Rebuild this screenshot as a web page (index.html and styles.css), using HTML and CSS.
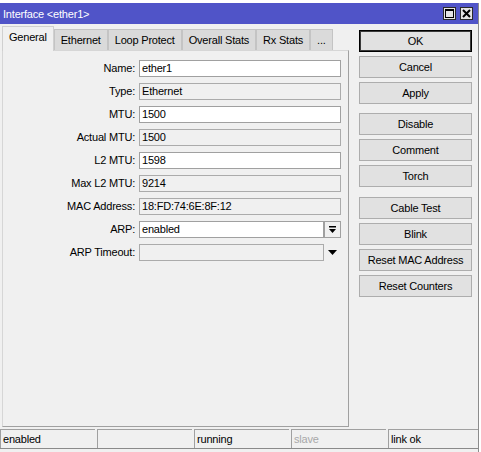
FILE: index.html
```html
<!DOCTYPE html>
<html>
<head>
<meta charset="utf-8">
<title>Interface</title>
<link rel="stylesheet" href="styles.css">
</head>
<body>
<div class="topstrip"></div>
<div class="window">
  <div class="titlebar">
    <span class="title">Interface &lt;ether1&gt;</span>
    <div class="tb-controls">
      <span class="tb-btn"><svg width="9" height="9" viewBox="0 0 9 9"><rect x="0.5" y="0.5" width="8" height="8" fill="none" stroke="#000"/><rect x="0" y="0" width="9" height="2" fill="#000"/></svg></span>
      <span class="tb-btn"><svg width="9" height="9" viewBox="0 0 9 9"><path d="M1 1L8 8M8 1L1 8" stroke="#000" stroke-width="2"/></svg></span>
    </div>
  </div>
  <div class="main">
    <div class="left">
      <div class="tabs">
        <span class="tab active">General</span>
        <span class="tab">Ethernet</span>
        <span class="tab">Loop Protect</span>
        <span class="tab">Overall Stats</span>
        <span class="tab">Rx Stats</span>
        <span class="tab">...</span>
      </div>
      <div class="panel">
        <div class="form">
          <span class="label">Name:</span><span class="field">ether1</span>
          <span class="label">Type:</span><span class="field ro">Ethernet</span>
          <span class="label">MTU:</span><span class="field">1500</span>
          <span class="label">Actual MTU:</span><span class="field ro">1500</span>
          <span class="label">L2 MTU:</span><span class="field">1598</span>
          <span class="label">Max L2 MTU:</span><span class="field ro">9214</span>
          <span class="label">MAC Address:</span><span class="field ro">18:FD:74:6E:8F:12</span>
          <span class="label">ARP:</span>
          <span class="combo"><span class="field short">enabled</span><span class="dd-btn"><svg width="9" height="9" viewBox="0 0 9 9"><rect x="1" y="1" width="7" height="1.5" fill="#000"/><path d="M1 4h7l-3.5 4z" fill="#000"/></svg></span></span>
          <span class="label">ARP Timeout:</span>
          <span class="combo"><span class="field ro short"></span><span class="dd-arrow"><svg width="9" height="5" viewBox="0 0 9 5"><path d="M0 0h9l-4.5 5z" fill="#000"/></svg></span></span>
        </div>
      </div>
    </div>
    <div class="buttons">
      <div class="group">
        <span class="btn default">OK</span>
        <span class="btn">Cancel</span>
        <span class="btn">Apply</span>
      </div>
      <div class="group g2">
        <span class="btn">Disable</span>
        <span class="btn">Comment</span>
        <span class="btn">Torch</span>
      </div>
      <div class="group g3">
        <span class="btn">Cable Test</span>
        <span class="btn">Blink</span>
        <span class="btn">Reset MAC Address</span>
        <span class="btn">Reset Counters</span>
      </div>
    </div>
  </div>
  <div class="statusbar">
    <span class="cell">enabled</span>
    <span class="cell"></span>
    <span class="cell">running</span>
    <span class="cell dim">slave</span>
    <span class="cell last">link ok</span>
  </div>
</div>
</body>
</html>
```
FILE: styles.css
```css
html, body {
  margin: 0;
  padding: 0;
}
body {
  background: #fff;
  font-family: "Liberation Sans", Arial, sans-serif;
  font-size: 11px;
  letter-spacing: -0.2px;
  color: #000;
  width: 481px;
  height: 452px;
  overflow: hidden;
}
.topstrip {
  height: 3px;
  background: #fff;
}
.window {
  width: 478px;
  height: 449px;
  background: #f0f0f0;
  border-right: 1px solid #8c8c8c;
}
.titlebar {
  height: 21px;
  background: #5054c8;
  color: #fff;
  display: flex;
  align-items: center;
  justify-content: space-between;
  padding: 0 5px 0 3px;
  font-size: 11px;
}
.tb-controls {
  display: flex;
  gap: 4px;
}
.tb-btn {
  width: 11px;
  height: 11px;
  border: 1px solid #2a2a2a;
  background: #e4e4e4;
  display: flex;
  align-items: center;
  justify-content: center;
}
.main {
  display: flex;
  height: 403px;
}
.left {
  margin-left: 2px;
  width: 347px;
  display: flex;
  flex-direction: column;
}
.tabs {
  display: flex;
  align-items: flex-end;
  height: 26px;
}
.tab {
  box-sizing: border-box;
  height: 21px;
  line-height: 20px;
  padding: 0 6px;
  border: 1px solid #c4c4c4;
  border-bottom: none;
  background: #dadada;
  white-space: nowrap;
}
.tab.active {
  height: 25px;
  line-height: 21px;
  background: #f0f0f0;
  position: relative;
  margin-bottom: -1px;
  z-index: 1;
  border-color: #d0d0d0;
}
.panel {
  height: 377px;
  box-sizing: border-box;
  border: 1px solid;
  border-color: #d6d6d6 #a0a0a0 #a0a0a0 #d6d6d6;
  padding-top: 9px;
}
.form {
  display: grid;
  grid-template-columns: 132px 202px;
  grid-auto-rows: 17px;
  column-gap: 4px;
  row-gap: 6px;
}
.label {
  text-align: right;
  line-height: 17px;
  white-space: nowrap;
}
.field {
  box-sizing: border-box;
  height: 17px;
  border: 1px solid #a0a0a0;
  background: #fff;
  padding: 0 2px;
  line-height: 15px;
  white-space: nowrap;
}
.field.ro {
  background: #f0f0f0;
  border-color: #ababab;
}
.combo {
  display: flex;
}
.field.short {
  width: 185px;
}
.dd-btn {
  box-sizing: border-box;
  width: 17px;
  height: 17px;
  border: 1px solid #a0a0a0;
  background: #f0f0f0;
  display: flex;
  align-items: center;
  justify-content: center;
}
.dd-arrow {
  width: 17px;
  height: 17px;
  display: flex;
  align-items: center;
  justify-content: center;
}
.buttons {
  margin-left: 10px;
  margin-top: 6px;
  width: 113px;
  display: flex;
  flex-direction: column;
}
.group {
  display: flex;
  flex-direction: column;
  gap: 4px;
}
.group.g2 {
  margin-top: 9px;
}
.group.g3 {
  margin-top: 10px;
}
.btn {
  box-sizing: border-box;
  height: 22px;
  line-height: 20px;
  border: 1px solid #adadad;
  background: #e1e1e1;
  text-align: center;
  white-space: nowrap;
}
.btn.default {
  border-color: #000;
  box-shadow: inset 0 0 0 1px #3a3a3a;
}
.statusbar {
  display: flex;
  gap: 2px;
  padding-top: 2px;
  height: 19px;
  border-bottom: 1px solid #8a8a8a;
}
.cell {
  box-sizing: border-box;
  width: 95px;
  height: 19px;
  border-top: 1px solid #a0a0a0;
  border-left: 1px solid #a0a0a0;
  padding-left: 2px;
  line-height: 18px;
  white-space: nowrap;
}
.cell.dim {
  color: #a8a8a8;
}
.cell.last {
  flex: 1;
}
```
